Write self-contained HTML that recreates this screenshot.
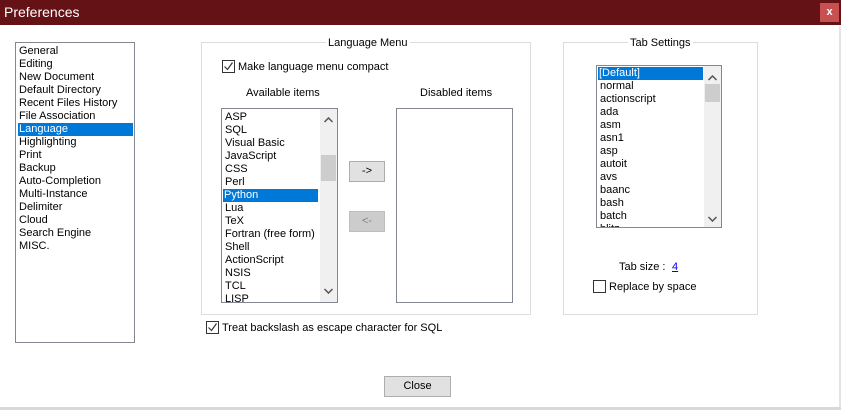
<!DOCTYPE html>
<html><head><style>
*{margin:0;padding:0;box-sizing:border-box}
body{width:841px;height:410px;background:#fff;position:relative;overflow:hidden;font-family:"Liberation Sans",Tahoma,sans-serif;font-size:11px;color:#000}
.a{position:absolute}
.title{left:0;top:0;width:841px;height:25px;background:#641216;color:#fff;font-size:14px;line-height:25px;padding-left:4px}
.x{left:820px;top:3px;width:19px;height:19px;background:#c75050;color:#fff;font-weight:bold;font-size:11px;text-align:center;line-height:18px}
.box{border:1px solid #828790;background:#fff}
.grp{border:1px solid #dcdcdc}
.leg{background:#fff;padding:0 2px;line-height:13px}
.it{position:absolute;left:2px;height:13px;line-height:13px;white-space:nowrap;padding-left:1px}
.sel{background:#0078d7;color:#fff}
.sb{background:#f0f0f0}
.th{background:#cdcdcd}
.btn{background:#e1e1e1;border:1px solid #adadad;text-align:center;line-height:18px}
.cb{width:13px;height:13px;border:1px solid #333;background:#fff}
</style></head><body>
<div class="a title">Preferences</div>
<div class="a x">x</div>
<div class="a" style="left:839px;top:26px;width:2px;height:384px;background:#e4e4e4"></div>
<div class="a" style="left:0;top:407px;width:841px;height:3px;background:#d9d9d9"></div>

<div class="a box" style="left:15px;top:42px;width:120px;height:301px">
<div class="it" style="top:2px">General</div>
<div class="it" style="top:15px">Editing</div>
<div class="it" style="top:28px">New Document</div>
<div class="it" style="top:41px">Default Directory</div>
<div class="it" style="top:54px">Recent Files History</div>
<div class="it" style="top:67px">File Association</div>
<div class="it sel" style="top:80px;width:115px">Language</div>
<div class="it" style="top:93px">Highlighting</div>
<div class="it" style="top:106px">Print</div>
<div class="it" style="top:119px">Backup</div>
<div class="it" style="top:132px">Auto-Completion</div>
<div class="it" style="top:145px">Multi-Instance</div>
<div class="it" style="top:158px">Delimiter</div>
<div class="it" style="top:171px">Cloud</div>
<div class="it" style="top:184px">Search Engine</div>
<div class="it" style="top:197px">MISC.</div>
</div>

<div class="a grp" style="left:201px;top:42px;width:330px;height:273px"></div>
<div class="a leg" style="left:326px;top:37px">Language Menu</div>
<div class="a cb" style="left:222px;top:60px"><svg width="11" height="11" style="display:block"><path d="M1.5 5.5l3 3 5-7" stroke="#333" fill="none" stroke-width="1.2"/></svg></div>
<div class="a" style="left:238px;top:60px;line-height:14px">Make language menu compact</div>
<div class="a" style="left:246px;top:87px;line-height:13px">Available items</div>
<div class="a" style="left:420px;top:87px;line-height:13px">Disabled items</div>

<div class="a box" style="left:221px;top:108px;width:117px;height:195px;overflow:hidden">
<div class="a sb" style="left:98px;top:0;width:17px;height:193px"></div>
<div class="a th" style="left:99px;top:46px;width:15px;height:26px"></div>
<svg class="a" style="left:101px;top:8px" width="11" height="6"><path d="M1.5 5l4-4 4 4" stroke="#555" fill="none" stroke-width="1.5"/></svg>
<svg class="a" style="left:101px;top:179px" width="11" height="6"><path d="M1.5 1l4 4 4-4" stroke="#555" fill="none" stroke-width="1.5"/></svg>
<div class="it" style="top:2px">ASP</div>
<div class="it" style="top:15px">SQL</div>
<div class="it" style="top:28px">Visual Basic</div>
<div class="it" style="top:41px">JavaScript</div>
<div class="it" style="top:54px">CSS</div>
<div class="it" style="top:67px">Perl</div>
<div class="it sel" style="top:80px;width:95px;left:1px">Python</div>
<div class="it" style="top:93px">Lua</div>
<div class="it" style="top:106px">TeX</div>
<div class="it" style="top:119px">Fortran (free form)</div>
<div class="it" style="top:132px">Shell</div>
<div class="it" style="top:145px">ActionScript</div>
<div class="it" style="top:158px">NSIS</div>
<div class="it" style="top:171px">TCL</div>
<div class="it" style="top:184px">LISP</div>
</div>
<div class="a btn" style="left:349px;top:161px;width:36px;height:21px">-&gt;</div>
<div class="a btn" style="left:349px;top:211px;width:36px;height:21px;background:#ccc;border-color:#bfbfbf;color:#838383">&lt;-</div>
<div class="a box" style="left:396px;top:108px;width:117px;height:195px"></div>

<div class="a cb" style="left:206px;top:321px"><svg width="11" height="11" style="display:block"><path d="M1.5 5.5l3 3 5-7" stroke="#333" fill="none" stroke-width="1.2"/></svg></div>
<div class="a" style="left:222px;top:321px;line-height:14px">Treat backslash as escape character for SQL</div>

<div class="a grp" style="left:563px;top:42px;width:195px;height:273px"></div>
<div class="a leg" style="left:628px;top:37px">Tab Settings</div>
<div class="a box" style="left:596px;top:65px;width:126px;height:163px;overflow:hidden">
<div class="a sb" style="left:107px;top:0;width:17px;height:161px"></div>
<div class="a th" style="left:108px;top:18px;width:15px;height:18px"></div>
<svg class="a" style="left:110px;top:9px" width="11" height="6"><path d="M1.5 5l4-4 4 4" stroke="#555" fill="none" stroke-width="1.5"/></svg>
<svg class="a" style="left:110px;top:150px" width="11" height="6"><path d="M1.5 1l4 4 4-4" stroke="#555" fill="none" stroke-width="1.5"/></svg>
<div class="it sel" style="top:1px;left:1px;width:105px">[Default]</div>
<div class="it" style="top:14px">normal</div>
<div class="it" style="top:27px">actionscript</div>
<div class="it" style="top:40px">ada</div>
<div class="it" style="top:53px">asm</div>
<div class="it" style="top:66px">asn1</div>
<div class="it" style="top:79px">asp</div>
<div class="it" style="top:92px">autoit</div>
<div class="it" style="top:105px">avs</div>
<div class="it" style="top:118px">baanc</div>
<div class="it" style="top:131px">bash</div>
<div class="it" style="top:144px">batch</div>
<div class="it" style="top:157px">blitz</div>
</div>
<div class="a" style="left:619px;top:261px;line-height:13px">Tab size :</div>
<div class="a" style="left:672px;top:261px;line-height:13px;color:#00f;text-decoration:underline">4</div>
<div class="a cb" style="left:593px;top:280px"></div>
<div class="a" style="left:609px;top:280px;line-height:14px">Replace by space</div>

<div class="a btn" style="left:384px;top:376px;width:67px;height:21px">Close</div>
</body></html>
